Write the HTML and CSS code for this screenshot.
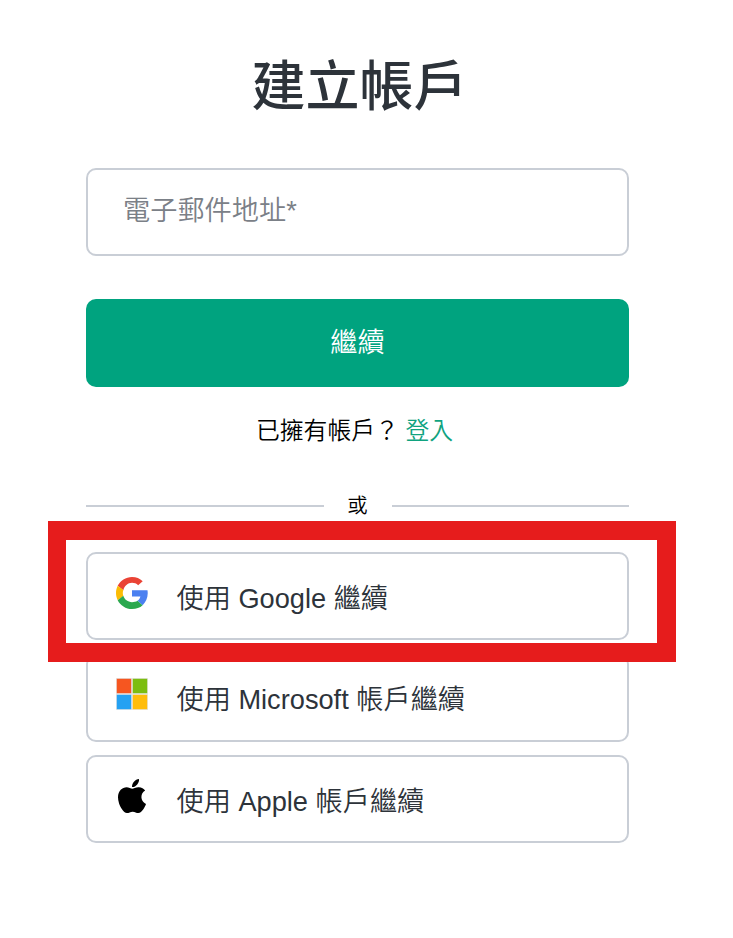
FILE: index.html
```html
<!DOCTYPE html>
<html lang="zh-Hant">
<head>
<meta charset="utf-8">
<title>建立帳戶</title>
<link rel="stylesheet" href="styles.css">
</head>
<body>
<main class="signup">
  <h1 class="title">建立帳戶</h1>
  <input class="email" type="text" placeholder="電子郵件地址*" aria-label="電子郵件地址">
  <button class="continue" type="button">繼續</button>
  <p class="login">已擁有帳戶？ <a class="login-link">登入</a></p>
  <div class="divider"><span class="divider-text">或</span></div>
  <div class="providers">
    <button class="provider highlighted" type="button">
      <svg class="icon" viewBox="0 0 48 48"><path fill="#ea4335" d="M24 8.6c3.54 0 6.71 1.22 9.21 3.6l6.85-5.95C35.9 2.38 30.47 0 24 0 14.62 0 6.51 5.38 2.56 13.22l8.4 6.5C12.43 13.72 17.74 8.6 24 8.6z"/><path fill="#4b80f0" d="M47.6 24.55c0-1.57-.15-3.09-.38-4.75H24v9.5h12.6c-.58 2.96-2.26 5-4.4 6.4l7.73 6.5c4.51-4.18 7.67-10.36 7.67-17.65z"/><path fill="#fbbc05" d="M10.96 28.4c-.48-1.45-.76-2.8-.76-4.4s.27-2.95.76-4.4l-8.4-6.38C.92 16.46 0 20.12 0 24c0 3.88.92 7.54 2.56 10.78l8.4-6.38z"/><path fill="#2ba84f" d="M24 48c6.48 0 11.93-2.13 15.89-5.81l-7.73-6.6c-2.15 1.45-4.92 2.2-8.16 2.2-6.26 0-11.37-3.9-13.07-9.5l-8.38 6.49C6.51 42.62 14.62 48 24 48z"/></svg>
      <span>使用 Google 繼續</span>
    </button>
    <button class="provider" type="button">
      <svg class="icon" viewBox="0 0 21 21"><path fill="#e6e6e6" d="M0 0h21v21H0z"/><path fill="#f65620" d="M.5.5h9.5v9.5H.5z"/><path fill="#7cbd10" d="M11 .5h9.5v9.5H11z"/><path fill="#25a1f2" d="M.5 11h9.5v9.5H.5z"/><path fill="#ffbd0b" d="M11 11h9.5v9.5H11z"/></svg>
      <span>使用 Microsoft 帳戶繼續</span>
    </button>
    <button class="provider" type="button">
      <svg class="icon icon-apple" viewBox="4 32 376 448" preserveAspectRatio="none"><path d="M318.7 268.7c-.2-36.7 16.4-64.4 50-84.8-18.8-26.9-47.2-41.7-84.7-44.6-35.5-2.8-74.3 20.7-88.5 20.7-15 0-49.4-19.7-76.4-19.7C63.3 141.2 4 184.8 4 273.5q0 39.3 14.4 81.2c12.8 36.7 59 126.7 107.2 125.2 25.2-.6 43-17.9 75.8-17.9 31.8 0 48.3 17.9 76.4 17.9 48.6-.7 90.4-82.5 102.6-119.3-65.2-30.7-61.7-90-61.7-91.9zm-56.6-164.2c27.3-32.4 24.8-61.9 24-72.5-24.1 1.4-52 16.4-67.9 34.9-17.5 19.8-27.8 44.3-25.6 71.9 26.1 2 49.9-11.4 69.5-34.3z"/></svg>
      <span>使用 Apple 帳戶繼續</span>
    </button>
  </div>
</main>
</body>
</html>
```
FILE: styles.css
```css
* { box-sizing: border-box; }

body {
  margin: 0;
  background: #fff;
  font-family: "Liberation Sans", "Noto Sans CJK TC", sans-serif;
  font-weight: 350;
  color: #2d333a;
}

.signup {
  width: 543px;
  margin: 0 0 0 86px;
  padding-top: 55px;
  display: flex;
  flex-direction: column;
}

.title {
  margin: 0 0 49px;
  height: 64px;
  padding-left: 4px;
  font-size: 54px;
  line-height: 64px;
  font-weight: 500;
  text-align: center;
}

.email {
  height: 88px;
  padding: 0 35px 2px;
  border: 2px solid #c9ced6;
  border-radius: 10px;
  font: 350 27.2px "Liberation Sans", "Noto Sans CJK TC", sans-serif;
  background: #fff;
}

.email::placeholder { color: #7b8087; opacity: 1; }

.continue {
  height: 88px;
  margin-top: 43px;
  padding: 0 0 7px;
  border: 0;
  border-radius: 10px;
  background: #00a37f;
  color: #fff;
  font: 350 27.2px "Liberation Sans", "Noto Sans CJK TC", sans-serif;
}

.login {
  margin: 27px 0 0;
  height: 34px;
  padding-right: 6px;
  font-size: 23.8px;
  line-height: 34px;
  text-align: center;
  color: #000;
}

.login-link { color: #10a37f; }

.divider {
  margin-top: 42px;
  height: 32px;
  display: grid;
  grid-template-columns: 1fr 68px 1fr;
  align-items: center;
  font-size: 20.4px;
  line-height: 32px;
  text-align: center;
  color: #000;
}

.divider::before,
.divider::after {
  content: "";
  height: 2px;
  background: #c9ced6;
}

.providers {
  margin-top: 30px;
  display: flex;
  flex-direction: column;
  gap: 13.6px;
}

.provider {
  height: 88px;
  padding: 0 0 0 28px;
  display: flex;
  align-items: center;
  gap: 28.5px;
  border: 2px solid #c9ced6;
  border-radius: 10px;
  background: #fff;
  color: #2d333a;
  font: 350 27.2px "Liberation Sans", "Noto Sans CJK TC", sans-serif;
}

.provider span { margin-top: -1px; }

.icon {
  width: 32px;
  height: 32px;
  margin-bottom: 7px;
}

.icon-apple {
  width: 28px;
  height: 34px;
  margin: 0 2px 6px;
}

.highlighted { position: relative; }

/* Red frame lying over the first provider and its neighbours */
.highlighted::after {
  content: "";
  position: absolute;
  inset: -33px -49px -24px -40px;
  border: 19px solid #e61c1c;
  border-left-width: 18px;
  pointer-events: none;
}
```
